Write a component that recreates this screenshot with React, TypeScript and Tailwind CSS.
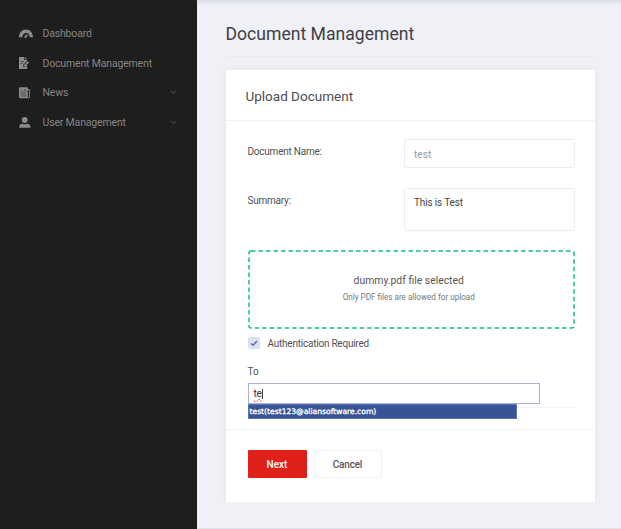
import type { ReactNode } from 'react';

interface NavItem {
  label: string;
  icon: ReactNode;
  expandable?: boolean;
}

const IconGauge = () => (
  <svg width="14" height="10" viewBox="0 0 14 10" fill="none">
    <path d="M0 8.300C0 3.700 3 0.500 7 0.500s7 3.200 7 7.800h-3.300C10.500 5.700 9.100 4.100 7 4.100S3.500 5.700 3.300 8.300z" fill="currentColor" />
    <path d="M5.300 6.900 9.300 4 8.100 8.300A1.500 1.500 0 1 1 5.300 6.900z" fill="currentColor" stroke="#1e1e1e" strokeWidth="0.500" />
  </svg>
);

const IconFileEdit = () => (
  <svg width="11" height="12" viewBox="0 0 11 12">
    <path d="M0 0h5.200v3h2.900v1L4.300 7.800v2h1.600l2.200-2V12H0z" fill="currentColor" />
    <path d="M5.900 0v2.300h2.200z" fill="currentColor" />
    <path d="M1.500 4.500h3.700M1.500 6.500h2.500" stroke="#1e1e1e" strokeWidth="0.500" />
    <path d="M4.500 8.200 8.800 3.900l1.600 1.500-4.300 4.300-1.900.3z" fill="currentColor" stroke="#1e1e1e" strokeWidth="0.500" />
  </svg>
);

const IconNewspaper = () => (
  <svg width="11" height="12" viewBox="0 0 11 12" fill="none">
    <path d="M0 1.200Q0 .2 1 .2h7q.8 0 .8 1v10H1.300Q0 11.200 0 10z" fill="currentColor" />
    <path d="M9 2.500h1.500v7.300q0 1.400-1.500 1.400" stroke="currentColor" strokeWidth="0.900" />
    <path d="M1.600 3h1.500M5 3h2.300M1.600 5h5.700M1.600 7h5.700M1.600 9h5.700" stroke="#1e1e1e" strokeWidth="0.600" />
  </svg>
);

const IconUser = () => (
  <svg width="12" height="11" viewBox="0 0 12 11" fill="currentColor">
    <circle cx="5.700" cy="3" r="2.900" />
    <path d="M0.200 10.700V9.300Q.4 6.900 3.200 6.700q2.500 1.200 5 0 2.900.2 3.200 2.600v1.400z" />
  </svg>
);

const NAV: NavItem[] = [
  { label: 'Dashboard', icon: <IconGauge /> },
  { label: 'Document Management', icon: <IconFileEdit /> },
  { label: 'News', icon: <IconNewspaper />, expandable: true },
  { label: 'User Management', icon: <IconUser />, expandable: true },
];

function Sidebar() {
  return (
    <aside className="w-[197px] shrink-0 bg-[#1e1e1e] pt-[19px]">
      <nav>
        {NAV.map((item) => (
          <a key={item.label} className="flex h-[29.500px] items-center pl-[19px] pr-[20px] text-[#8c8c8c]">
            <span className="flex w-[23.500px] shrink-0">{item.icon}</span>
            <span className="flex-1 whitespace-nowrap pt-px text-[10.500px] tracking-[-0.170px] text-[#858585]">{item.label}</span>
            {item.expandable && (
              <svg width="7" height="5" viewBox="0 0 7 5" fill="none">
                <path d="M1 1l2.500 2.400L6 1" stroke="#3d3f46" strokeWidth="1.100" />
              </svg>
            )}
          </a>
        ))}
      </nav>
    </aside>
  );
}

function UploadForm() {
  return (
    <form className="h-[308px] pl-[22px] pr-[20px] pt-[18px] text-[10px] tracking-[-0.230px] text-[#505050]">
      <div className="flex h-[48.500px] items-start justify-between">
        <label className="pt-[5px]">Document Name:</label>
        <input
          defaultValue="test"
          className="h-[29px] w-[171px] rounded-[2px] border border-[#ededf1] px-[9px] pt-px text-[10.200px] tracking-normal text-[#999ca5] outline-none"
        />
      </div>
      <div className="flex h-[62.500px] items-start justify-between">
        <label className="pt-[5px]">Summary:</label>
        <textarea
          defaultValue="This is Test"
          className="h-[43px] w-[171px] resize-none rounded-[2px] border border-[#ededf1] px-[9px] pt-[6px] text-[10px] tracking-[-0.150px] text-[#444] outline-none"
        />
      </div>
      <div className="relative flex h-[79px] flex-col items-center pt-[23px] tracking-normal">
        <svg className="absolute inset-0 h-full w-full" fill="none">
          <rect x="1" y="1" width="325" height="77" rx="2" stroke="#1abc8c" strokeWidth="1.500" strokeDasharray="4.500 3" />
        </svg>
        <div className="pr-[5px] text-[10.400px] leading-[16px] text-[#555]">dummy.pdf file selected</div>
        <div className="mt-[2px] pr-[5px] text-[8.150px] leading-[13px] text-[#747781]">Only PDF files are allowed for upload</div>
      </div>
      <label className="mt-[7px] flex h-[14px] items-center gap-[8px]">
        <span className="grid size-[12px] place-items-center rounded-[2px] bg-[#dfe1ea]">
          <svg width="8" height="7" viewBox="0 0 8 7" fill="none">
            <path d="M1 3.500l2 1.800L7 1" stroke="#5d6bc9" strokeWidth="1.500" />
          </svg>
        </span>
        Authentication Required
      </label>
      <div className="mt-[15px] h-[14px] leading-[14px] tracking-normal">To</div>
      <div className="relative mt-[4px] h-[25px] border-b border-[#f3f3f5]">
        <div className="flex h-[21px] w-[292px] items-center border border-[#a9b0d1] bg-white pl-[5px] leading-[14px] text-[#333]">
          <span className="underline decoration-[#e06b60] decoration-wavy decoration-[0.500px] underline-offset-[1px]">te</span>
          <span className="h-[10px] w-px bg-[#444]" />
        </div>
        <div className="absolute left-0 top-[21px] h-[15px] w-[269px] border border-[#5875b0] bg-[#375596] pl-px font-['DejaVu_Sans',sans-serif] text-[7.600px] leading-[13px] tracking-normal text-white [-webkit-text-stroke:0.300px_white]">
          test(test123@aliansoftware.com)
        </div>
      </div>
    </form>
  );
}

export default function App() {
  return (
    <div className="flex h-[529px] w-[621px] overflow-hidden bg-[#f0f1f7] font-['Roboto',sans-serif]">
      <Sidebar />
      <main className="flex-1 border-b border-[#e2e3ea] pl-[28.500px] pr-[26px] shadow-[inset_0_4px_4px_-2px_#d9dae2]">
        <h1 className="h-[57px] border-b border-[#e8e9f1] pt-[22px] text-[17.600px] leading-[24px] text-[#3f4047]">
          Document Management
        </h1>
        <section className="mt-[13px] h-[432px] bg-white shadow-[0_0_6px_rgba(69,65,78,0.080)] [clip-path:inset(-5px_-6px_0)]">
          <h2 className="h-[51px] border-b border-[#eff0f3] pl-[20px] pt-[16px] text-[13.500px] leading-[20px] text-[#4b4c52]">
            Upload Document
          </h2>
          <UploadForm />
          <footer className="flex gap-[7px] border-t border-[#f2f2f5] pl-[22px] pt-[20px] text-[10px] font-medium tracking-[-0.200px]">
            <button className="h-[28px] w-[59px] rounded-[1px] bg-[#df2119] pt-px tracking-normal text-white">Next</button>
            <button className="h-[28px] w-[68px] rounded-[1px] border border-[#f0f0f3] bg-white pt-px text-[#555]">Cancel</button>
          </footer>
        </section>
      </main>
    </div>
  );
}
